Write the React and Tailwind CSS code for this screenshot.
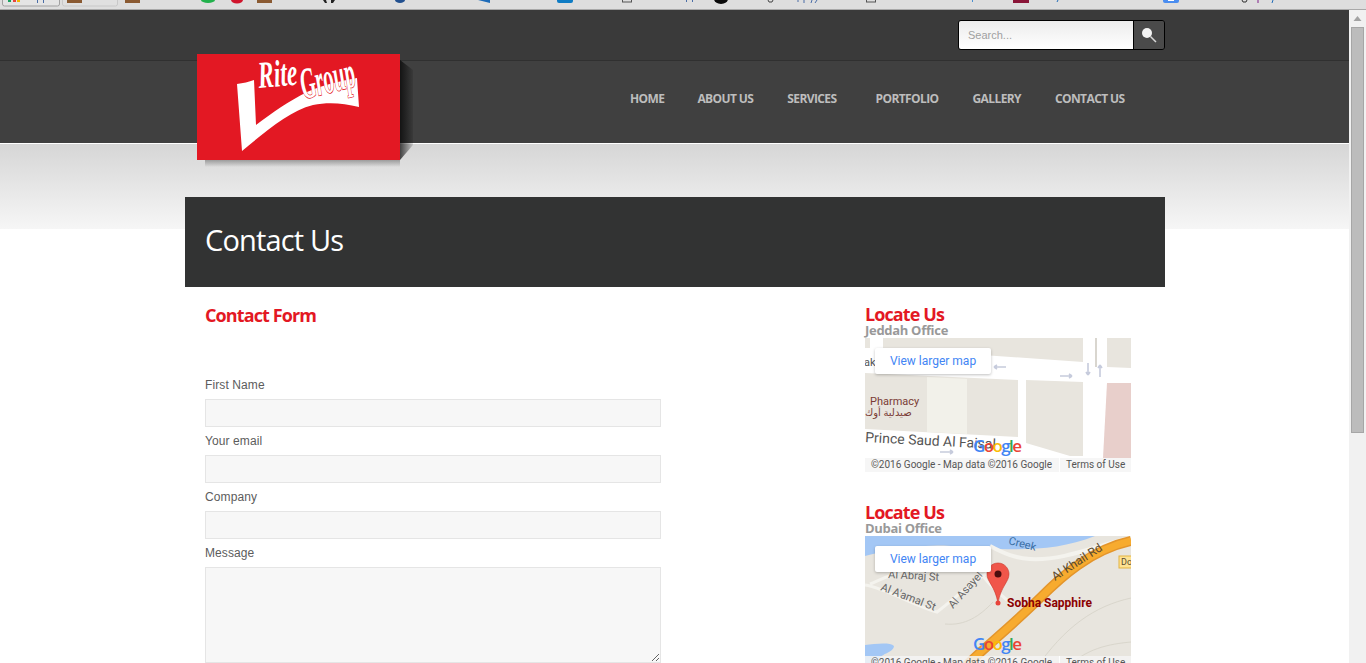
const navItems = [
  { label: "HOME", className: "" },
  { label: "ABOUT US", className: "ml-[33px]" },
  { label: "SERVICES", className: "ml-[34px]" },
  { label: "PORTFOLIO", className: "ml-[39px]" },
  { label: "GALLERY", className: "ml-[34px]" },
  { label: "CONTACT US", className: "ml-[34px]" },
];

const formFields = ["First Name", "Your email", "Company"];

// cut-off bookmark icons along the very top of the window
function BookmarkStrip() {
  return (
    <div className="h-[10px] shrink-0 bg-[#dedede] border-b border-[#a9a9a9]">
      <svg width="1366" height="9" className="block">
        <rect x="62.5" y="-6" width="55" height="12" rx="2" fill="#e0e0e0" stroke="#c8c8c8" />
        <rect x="2.5" y="-6" width="57" height="12" rx="2" fill="#e4e4e4" stroke="#a0a0a0" />
        <rect x="8" y="0" width="3" height="2" fill="#1aa260" />
        <rect x="13" y="0" width="3" height="2" fill="#e8453c" />
        <rect x="17" y="0" width="3" height="2" fill="#f4b400" />
        <rect x="37" y="0" width="1" height="3" fill="#4a6da7" />
        <rect x="43" y="0" width="1" height="3" fill="#4a6da7" />
        <rect x="67" y="0" width="15" height="3" fill="#8a5a32" />
        <rect x="125" y="0" width="15" height="3" fill="#8a5a32" />
        <ellipse cx="208" cy="0" rx="7" ry="3" fill="#22b14c" />
        <ellipse cx="237" cy="0" rx="6" ry="3.5" fill="#d0142c" />
        <rect x="257" y="0" width="15" height="3" fill="#8a5a32" />
        <path d="M323 0l2 3h2l-1-3zM331 0v3h2l2-3z" fill="#222" />
        <ellipse cx="400" cy="0" rx="5" ry="3" fill="#22508f" />
        <path d="M478 0l12 3V0z" fill="#1e6bb8" />
        <rect x="557" y="-4" width="16" height="7" rx="2" fill="#0f7cc4" />
        <rect x="622.5" y="-4" width="9" height="6" fill="none" stroke="#555" />
        <rect x="686" y="0" width="1" height="2" fill="#4a6da7" />
        <rect x="692" y="0" width="1" height="2" fill="#4a6da7" />
        <ellipse cx="721" cy="-1" rx="7" ry="5" fill="#0a0a0a" />
        <path d="M768 0l1 2h3l1-2" fill="none" stroke="#444" />
        <path d="M798 0v2M804 0v3M812 0l-1 3M817 0l-2 3" stroke="#4a6da7" />
        <rect x="866.5" y="-4" width="9" height="6" fill="none" stroke="#555" />
        <rect x="972" y="0" width="1" height="2" fill="#4a8fd0" />
        <rect x="1013" y="0" width="16" height="3" fill="#8a1538" />
        <path d="M1058 0l-1 2" stroke="#1e6bb8" />
        <rect x="1163" y="-3" width="16" height="6" rx="2" fill="#4a8df0" />
        <rect x="1168" y="0" width="6" height="1" fill="#ffffff" />
        <path d="M1242 0l1 2h3l1-2" fill="none" stroke="#333" />
        <path d="M1258 0v3" stroke="#80208a" />
        <path d="M1273 0l-1 3" stroke="#1e6bb8" />
      </svg>
    </div>
  );
}

function Scrollbar() {
  return (
    <div className="w-[17px] shrink-0 bg-[#f1f1f1] flex flex-col items-center">
      <svg width="17" height="17" className="block shrink-0">
        <path d="M8.5 6l4 5h-8z" fill="#a3a3a3" />
      </svg>
      <div className="w-[13px] h-[406px] bg-[#bcbcbc] border border-[#a6a6a6]" />
    </div>
  );
}

function LogoMark() {
  return (
    <div className="absolute left-[197px] top-[44px] w-[203px] h-[106px]">
      <div className="absolute left-[203px] top-[6px] w-[13px] h-[100px] bg-gradient-to-r from-black/70 to-black/10 [clip-path:polygon(0_0,100%_10%,100%_85%,0_100%)]" />
      <div className="absolute left-[8px] top-[106px] w-[195px] h-[7px] bg-gradient-to-b from-[#9c9c9c] to-transparent" />
      <div className="relative w-full h-full bg-[#e31823] overflow-hidden">
        <svg width="203" height="106" className="block">
          <path d="M40 30C46 29 52 28 57 26L59 71C76 58 92 47 110 38C126 31 143 27 160 24L162 53C146 49 131 48 116 51C92 57 68 78 45 97Z" fill="#ffffff" />
          <text
            transform="translate(62 34) rotate(-5) scale(0.62 1)"
            fill="#ffffff"
            stroke="#e31823"
            strokeWidth="1.2"
            paintOrder="stroke"
            fontSize="38"
            fontWeight="700"
            fontStyle="italic"
            fontFamily="'Liberation Serif', serif"
          >
            Rite
          </text>
          <text
            transform="translate(107 45) rotate(-14) scale(0.47 1)"
            fill="#ffffff"
            stroke="#e31823"
            strokeWidth="1.5"
            paintOrder="stroke"
            fontSize="44"
            fontWeight="700"
            fontStyle="italic"
            fontFamily="'Liberation Serif', serif"
          >
            Group
          </text>
        </svg>
      </div>
    </div>
  );
}

function SearchBox() {
  return (
    <div className="flex w-[207px] h-[30px] border border-black rounded-[3px] overflow-hidden">
      <div className="flex-1 bg-gradient-to-b from-[#ececec] to-white flex items-center pl-[9px] text-[11px] text-[#a0a0a0] [font-family:'Liberation_Sans',Arial,sans-serif]">
        Search...
      </div>
      <div className="w-[31px] bg-[#4a4a4a] border-l border-black flex items-center justify-center">
        <svg width="16" height="16" viewBox="0 0 16 16">
          <circle cx="6" cy="6" r="5" fill="#f4f4f4" />
          <path d="M9.5 9.5l5.5 5.5" stroke="#d8d8d8" strokeWidth="1.5" />
        </svg>
      </div>
    </div>
  );
}

function GoogleMark({ x, y }) {
  return (
    <text x={x} y={y} fontSize="17" fontWeight="600" fontFamily="'Open Sans', sans-serif" textLength="49">
      <tspan fill="#4285f4">G</tspan>
      <tspan fill="#ea4335">o</tspan>
      <tspan fill="#fbbc05">o</tspan>
      <tspan fill="#4285f4">g</tspan>
      <tspan fill="#34a853">l</tspan>
      <tspan fill="#ea4335">e</tspan>
    </text>
  );
}

function Attribution({ y }) {
  return (
    <g>
      <rect x="0" y={y} width="266" height="14" fill="#f5f5f5" fillOpacity="0.85" />
      <rect x="194" y={y} width="1" height="14" fill="#ffffff" />
      <text x="6" y={y + 10} fontSize="10" fill="#555" fontFamily="Roboto, sans-serif">
        ©2016 Google - Map data ©2016 Google
      </text>
      <text x="201" y={y + 10} fontSize="10" fill="#555" fontFamily="Roboto, sans-serif">
        Terms of Use
      </text>
    </g>
  );
}

function Arrow({ d }) {
  return <path d={d} fill="none" stroke="#c6cbdc" strokeWidth="1.6" />;
}

function JeddahMap() {
  return (
    <svg width="266" height="134" viewBox="0 0 266 134" className="block">
      <rect width="266" height="134" fill="#ffffff" />
      <path d="M0 0H5V10H0ZM18 0H218V24L18 10Z" fill="#e8e5de" />
      <path d="M0 35L153 42V99L0 91Z" fill="#e8e5de" />
      <path d="M62 39L102 41V96L62 94Z" fill="#f2f1ea" />
      <path d="M161 42L218 44V118L205 118L161 105Z" fill="#e8e5de" />
      <path d="M242 45H266V120H238Z" fill="#e8cfcb" />
      <path d="M242 0H266V30L242 29Z" fill="#e8e5de" />
      <path d="M230 0H232V29H230Z" fill="#d9d6cf" />
      <Arrow d="M129 29h12M129 29l3-2M129 29l3 2" />
      <Arrow d="M195 38h12M207 38l-3-2M207 38l-3 2" />
      <Arrow d="M223 25v12M223 37l-2-3M223 37l2-3" />
      <Arrow d="M235 27v12M235 27l-2 3M235 27l2 3" />
      <Arrow d="M75 114h13M88 114l-3-2M88 114l-3 2" />
      <text x="-1" y="28" fontSize="11" fill="#555" fontFamily="Roboto, sans-serif">ak</text>
      <text x="5" y="67" fontSize="11" fill="#7a3b35" fontFamily="Roboto, sans-serif">Pharmacy</text>
      <text x="0" y="78" fontSize="10" fill="#7a3b35" fontFamily="'Noto Sans', 'DejaVu Sans', sans-serif">صيدلية أوك</text>
      <text
        x="0"
        y="104"
        transform="rotate(3 0 104)"
        fontSize="14"
        fill="#555"
        fontFamily="Roboto, sans-serif"
      >
        Prince Saud Al Faisal
      </text>
      <GoogleMark x="108" y="114" />
      <Attribution y={120} />
    </svg>
  );
}

function DubaiMap() {
  return (
    <svg width="266" height="134" viewBox="0 0 266 134" className="block">
      <rect width="266" height="134" fill="#e8e5de" />
      <path d="M0 0H230C200 12 170 14 135 13C105 12 80 8 60 10C35 12 15 16 0 20Z" fill="#a3c7f5" />
      <path d="M125 10C140 18 150 22 165 23C200 25 235 8 266 2" fill="none" stroke="#f4f3ee" strokeWidth="4" />
      <path d="M0 49C20 52 50 70 72 76C90 62 105 48 122 37" fill="none" stroke="#f4f3ee" strokeWidth="3" />
      <path d="M5 48C15 44 25 38 40 36" fill="none" stroke="#f4f3ee" strokeWidth="3" />
      <path d="M118 40C125 50 135 58 142 64" fill="none" stroke="#f4f3ee" strokeWidth="3" />
      <path d="M128 66C115 80 100 90 80 88" fill="none" stroke="#d9d6cc" strokeWidth="1" />
      <path d="M170 134C200 90 230 70 266 62" fill="none" stroke="#d9d6cc" strokeWidth="1" />
      <path d="M200 134C220 112 245 108 266 106" fill="none" stroke="#d9d6cc" strokeWidth="1" />
      <path d="M0 109C10 108 25 106 29 110C28 118 15 116 12 127L0 127Z" fill="#a3c7f5" />
      <path d="M97 134C118 112 138 98 175 62C195 42 225 14 266 5" fill="none" stroke="#e3952c" strokeWidth="10" />
      <path d="M97 134C118 112 138 98 175 62C195 42 225 14 266 5" fill="none" stroke="#f7ab2f" strokeWidth="7" />
      <text x="143" y="8" transform="rotate(14 143 8)" fontSize="11" fill="#3b6fa5" fontFamily="Roboto, sans-serif">Creek</text>
      <text x="190" y="45" transform="rotate(-33 190 45)" fontSize="12" fill="#5a4a30" fontFamily="Roboto, sans-serif">Al Khail Rd</text>
      <text x="23" y="42" transform="rotate(3 23 42)" fontSize="11" fill="#666" fontFamily="Roboto, sans-serif">Al Abraj St</text>
      <text x="15" y="54" transform="rotate(21 15 54)" fontSize="11" fill="#666" fontFamily="Roboto, sans-serif">Al A'amal St</text>
      <text x="88" y="73" transform="rotate(-48 88 73)" fontSize="11" fill="#666" fontFamily="Roboto, sans-serif">Al Asayel</text>
      <rect x="254" y="20" width="14" height="12" fill="#fde293" stroke="#e3b341" />
      <text x="256" y="29" fontSize="9" fill="#5a4a30" fontFamily="Roboto, sans-serif">Do</text>
      <path d="M133 27C126 27 122 33 122 38C122 46 130 50 133 67C136 50 144 46 144 38C144 33 140 27 133 27Z" fill="#f0564a" stroke="#c8372c" strokeWidth="0.6" />
      <circle cx="133" cy="38" r="3.5" fill="#4a0d0d" />
      <circle cx="133" cy="67" r="2.5" fill="#e8453c" />
      <text x="142" y="71" fontSize="12" fontWeight="700" fill="#8b0000" fontFamily="Roboto, sans-serif">Sobha Sapphire</text>
      <GoogleMark x="108" y="114" />
      <Attribution y={120} />
    </svg>
  );
}

function MapCard({ office, children }) {
  return (
    <div>
      <h3 className="text-[18px] leading-[20px] font-bold text-[#e31823] [font-family:'Open_Sans',sans-serif] tracking-[-0.9px]">
        Locate Us
      </h3>
      <div className="text-[13px] leading-[12px] font-bold text-[#999999] [font-family:'Open_Sans',sans-serif] tracking-[-0.3px]">
        {office}
      </div>
      <div className="relative mt-[2px] w-[266px] h-[134px] overflow-hidden">
        {children}
        <div className="absolute left-[10px] top-[10px] w-[116px] h-[26px] bg-white rounded-[2px] shadow-[0_1px_3px_rgba(0,0,0,0.25)] flex items-center justify-center text-[12px] text-[#4285f4] [font-family:Roboto,sans-serif]">
          View larger map
        </div>
      </div>
    </div>
  );
}

export default function App() {
  return (
    <div className="relative w-[1366px] h-[663px] overflow-hidden bg-white flex flex-col">
      <BookmarkStrip />
      <div className="flex flex-1 min-h-0">
        <div className="relative flex-1 min-w-0 overflow-hidden">
          {/* Top bar with search */}
          <div className="h-[51px] bg-[#3a3a3a] border-b border-[#303030] pl-[958px] pt-[10px]">
            <SearchBox />
          </div>

          {/* Nav band */}
          <div className="h-[82px] bg-[#404040] pl-[630px] flex items-center pb-[6px]">
            {navItems.map((item) => (
              <a
                key={item.label}
                className={`text-[12px] font-bold text-[#bdbdbd] [font-family:'Open_Sans',sans-serif] tracking-[-0.6px] ${item.className}`}
              >
                {item.label}
              </a>
            ))}
          </div>

          {/* Title band sits on the grey fade */}
          <div className="border-t border-white bg-[linear-gradient(#d6d6d6,#f6f6f6)] bg-no-repeat bg-[length:100%_85px] pt-[53px]">
            <div className="ml-[185px] w-[980px] h-[90px] bg-[#323333] flex items-center pl-[20px] pb-[4px]">
              <h1 className="text-[29px] text-white [font-family:'Open_Sans',sans-serif] tracking-[-0.85px]">Contact Us</h1>
            </div>
          </div>

          {/* Main content */}
          <div className="ml-[205px] flex">
            <div className="w-[660px] pt-[17px]">
              <h2 className="text-[18px] leading-[22px] font-bold text-[#e31823] [font-family:'Open_Sans',sans-serif] tracking-[-0.9px]">
                Contact Form
              </h2>
              <div className="mt-[52px] w-[456px] [font-family:'Liberation_Sans',Arial,sans-serif]">
                {formFields.map((label) => (
                  <div key={label} className="h-[56px]">
                    <label className="block h-[14px] leading-[14px] text-[12px] text-[#5c5c5c] tracking-[0.1px]">{label}</label>
                    <input className="block mt-[7px] w-full h-[28px] bg-[#f7f7f7] border border-[#e5e5e5] outline-none" />
                  </div>
                ))}
                <label className="block h-[14px] leading-[14px] text-[12px] text-[#5c5c5c] tracking-[0.1px]">Message</label>
                <textarea className="block mt-[7px] w-full h-[96px] bg-[#f7f7f7] border border-[#e5e5e5] outline-none resize-y" />
              </div>
            </div>
            <div className="w-[266px] pt-[17px] flex flex-col gap-[30px]">
              <MapCard office="Jeddah Office">
                <JeddahMap />
              </MapCard>
              <MapCard office="Dubai Office">
                <DubaiMap />
              </MapCard>
            </div>
          </div>

          <LogoMark />
        </div>
        <Scrollbar />
      </div>
    </div>
  );
}
